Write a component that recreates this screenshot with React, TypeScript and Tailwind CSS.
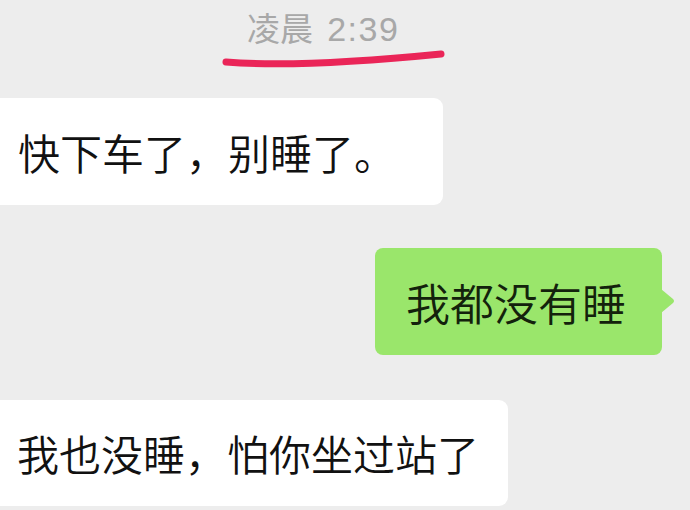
export default function App() {
  return (
    <div
      className="relative w-[690px] h-[510px] overflow-hidden bg-[#ededed] flex flex-col font-[350]"
      style={{ fontFamily: '"Noto Sans CJK SC", "Noto Sans", sans-serif' }}
    >
      {/* timestamp */}
      <div
        className="mt-[10px] pl-[247px] h-[38px] text-[33px] leading-[38px] text-[#a8a8a8] whitespace-nowrap font-normal"
        style={{ fontFamily: '"Liberation Sans", "Noto Sans CJK SC", sans-serif' }}
      >
        凌晨 <span className="ml-[5px] text-[34px] tracking-[1.5px]">2:39</span>
      </div>

      {/* red hand-drawn underline */}
      <svg className="absolute left-0 top-0" width="690" height="80" viewBox="0 0 690 80">
        <path
          d="M226 62 Q300 68 441 54"
          fill="none"
          stroke="#ea2558"
          strokeWidth="7"
          strokeLinecap="round"
        />
      </svg>

      {/* incoming */}
      <div className="mt-[50px] self-start h-[107px] flex items-center bg-white rounded-r-[9px] pl-[18px] pr-[47px] text-[42px] leading-none text-[#111] whitespace-nowrap">
        快下车了，别睡了。
      </div>

      {/* outgoing */}
      <div className="mt-[43px] self-end mr-[28px] relative">
        <div className="h-[107px] flex items-center bg-[#9ae66b] rounded-[8px] pl-[31px] pr-[36px] text-[44px] leading-none text-[#13220c] whitespace-nowrap">
          我都没有睡
        </div>
        <svg className="absolute -right-[13px] top-[41px]" width="14" height="24" viewBox="0 0 14 24">
          <path d="M0 0 L12 10 Q14 12 12 14 L0 24 Z" fill="#9ae66b" />
        </svg>
      </div>

      {/* incoming */}
      <div className="mt-[45px] self-start h-[106px] flex items-center bg-white rounded-r-[9px] pl-[17px] pr-[29px] text-[42px] leading-none text-[#111] whitespace-nowrap">
        我也没睡，怕你坐过站了
      </div>
    </div>
  );
}
